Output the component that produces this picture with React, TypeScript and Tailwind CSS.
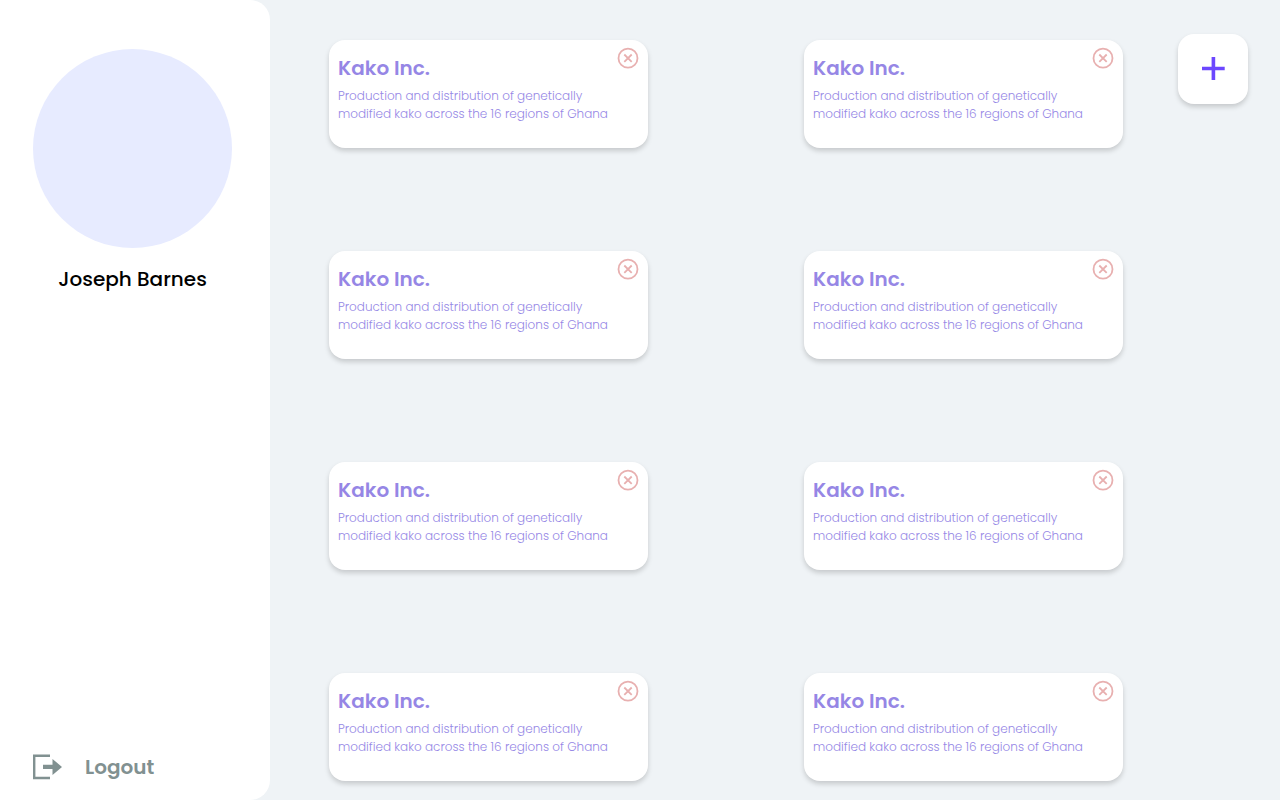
import React from "react";

type Company = { id: number; name: string; description: string };

const companies: Company[] = Array.from({ length: 8 }, (_, i) => ({
  id: i + 1,
  name: "Kako Inc.",
  description:
    "Production and distribution of genetically modified kako across the 16 regions of Ghana",
}));

function CloseIcon() {
  return (
    <svg viewBox="0 0 22 22" className="size-[22px]" fill="none" stroke="currentColor" aria-hidden="true">
      <circle cx="11" cy="11.2" r="9.5" strokeWidth="1.8" />
      <path d="M7.3 7.5l7.4 7.4M14.7 7.5l-7.4 7.4" strokeWidth="1.8" />
    </svg>
  );
}

function LogoutIcon() {
  return (
    <svg viewBox="0 0 29 25" className="h-[25px] w-[29px] overflow-visible" fill="currentColor" aria-hidden="true">
      <path d="M0 -.6H17V1.9H2.4V21.7H17V24.2H0Z" />
      <path d="M10 9.8H19.5V4L29 11.9L19.5 20V14H10Z" />
    </svg>
  );
}

function CompanyCard({ company }: { company: Company }) {
  return (
    <article className="flex h-[108px] items-start justify-between rounded-2xl bg-white pt-[7px] pr-[9px] pl-[9px] shadow-[0_3px_5px_rgba(0,0,0,0.17)]">
      <div className="pt-[6px] text-[#6a54db] opacity-70">
        <h2 className="text-[20px] leading-[30px] font-semibold">{company.name}</h2>
        <p className="mt-1 w-[272px] text-[12px] leading-[18px] font-light">
          {company.description}
        </p>
      </div>
      <button type="button" aria-label="Remove company" className="shrink-0 text-[#e8b0b0]">
        <CloseIcon />
      </button>
    </article>
  );
}

export default function App() {
  return (
    <div className="flex min-h-screen bg-[#eff3f6] font-['Poppins','Inter',sans-serif]">
      <aside className="flex w-[270px] shrink-0 flex-col justify-between rounded-r-[20px] bg-white pt-[49px] pb-[18px]">
        <div className="flex flex-col items-center pr-[5px]">
          <div className="size-[199px] rounded-full bg-[#e7ebff]" />
          <p className="mt-4 text-[20px] leading-[30px] font-medium text-black">Joseph Barnes</p>
        </div>
        <button type="button" className="ml-[33px] flex items-center gap-[23px] self-start text-[#4d6363] opacity-70">
          <LogoutIcon />
          <span className="text-[20px] leading-[30px] font-semibold">Logout</span>
        </button>
      </aside>
      <main className="flex flex-1 items-start gap-[55px] pr-8 pl-[59px]">
        <div className="grid flex-1 grid-cols-2 gap-x-[156px] gap-y-[103px] pt-10">
          {companies.map((company) => (
            <CompanyCard key={company.id} company={company} />
          ))}
        </div>
        <button
          type="button"
          aria-label="Add company"
          className="mt-[34px] flex size-[70px] shrink-0 items-center justify-center rounded-2xl bg-white text-[#6c47ff] shadow-[0_3px_5px_rgba(0,0,0,0.17)]"
        >
          <svg viewBox="0 0 24 24" className="size-6" fill="none" stroke="currentColor" strokeWidth="3.6" aria-hidden="true">
            <path d="M12.4 0V23M1 11.5H23.7" />
          </svg>
        </button>
      </main>
    </div>
  );
}
